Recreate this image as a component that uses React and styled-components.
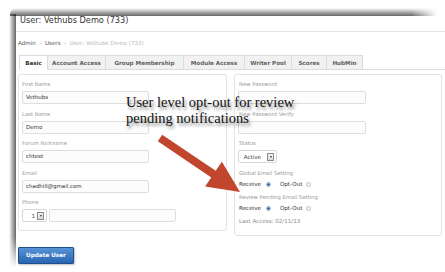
import React from 'react';
import styled, { createGlobalStyle } from 'styled-components';

const GlobalStyle = createGlobalStyle`
  html, body {
    margin: 0;
    padding: 0;
    background: #ffffff;
    overflow: hidden;
  }
  body {
    font-family: "DejaVu Sans", Verdana, sans-serif;
  }
`;

const Page = styled.div`
  position: relative;
  width: 445px;
  height: 272px;
  overflow: hidden;
  background: #fff;
`;

const Frame = styled.div`
  position: relative;
  margin: 16px 0 0 16px;
  width: 440px;
  height: 252px;
  background: #fff;

  &::before {
    content: '';
    position: absolute;
    left: -7px;
    top: -2px;
    bottom: 0;
    width: 7px;
    background: linear-gradient(to right, rgba(0, 0, 0, 0), rgba(0, 0, 0, 0.25) 40%, rgba(0, 0, 0, 0.6));
    -webkit-mask-image: linear-gradient(to bottom, #000 0, #000 88%, transparent 100%);
    mask-image: linear-gradient(to bottom, #000 0, #000 88%, transparent 100%);
  }

  &::after {
    content: '';
    position: absolute;
    top: -8px;
    left: -6px;
    width: 427px;
    height: 8px;
    border-top-left-radius: 6px;
    background: linear-gradient(to bottom, rgba(0, 0, 0, 0), rgba(0, 0, 0, 0.25) 40%, rgba(0, 0, 0, 0.6));
    -webkit-mask-image: linear-gradient(to right, #000 0, #000 94%, transparent 100%);
    mask-image: linear-gradient(to right, #000 0, #000 94%, transparent 100%);
  }
`;

const TitleBar = styled.div`
  padding: 0 0 6px 4px;
  line-height: 9px;
  font-size: 8.2px;
  color: #333;
  border-bottom: 1px solid #e4e4e4;
`;

const Breadcrumb = styled.div`
  display: flex;
  align-items: center;
  gap: 3px;
  padding: 7px 0 8px 2px;
  line-height: 8px;
  font-size: 5.6px;
`;

const Crumb = styled.span`
  color: ${p => p.$muted ? '#b8b8b8' : '#555'};
`;

const Sep = styled.span`
  color: #cfcfcf;
  font-size: 5px;
`;

const TabBar = styled.div`
  display: flex;
  margin-left: 3px;
  height: 14px;
  border-bottom: 1px solid #dcdcdc;
`;

const Tab = styled.div`
  width: ${p => p.$w}px;
  box-sizing: border-box;
  display: flex;
  align-items: center;
  justify-content: center;
  font-size: 5.6px;
  font-weight: bold;
  color: ${p => p.$active ? '#333' : '#606060'};
  background: ${p => p.$active ? '#fff' : '#f1f1f1'};
  border: 1px solid #dcdcdc;
  border-left-width: ${p => p.$first ? 1 : 0}px;
  border-bottom: ${p => p.$active ? '1px solid #fff' : 'none'};
  margin-bottom: ${p => p.$active ? -1 : 0}px;
`;

const Columns = styled.div`
  display: flex;
  align-items: flex-start;
  gap: 7px;
  margin: 4px 0 0 2px;
`;

const Panel = styled.div`
  box-sizing: border-box;
  width: ${p => p.$w}px;
  border: 1px solid #e3e3e3;
  border-radius: 3px;
  padding: 6px 3px ${p => p.$pb}px;
`;

const Field = styled.div`
  margin-bottom: ${p => p.$mb ?? 6.5}px;
`;

const Label = styled.div`
  font-size: 5.3px;
  line-height: 6px;
  color: #9a9a9a;
  margin-bottom: 4px;
  padding-left: ${p => p.$pl || 0}px;
`;

const Input = styled.div`
  box-sizing: border-box;
  width: ${p => p.$w}px;
  height: 13px;
  border: 1px solid #dedede;
  border-radius: 2px;
  background: #fcfcfc;
  font-size: 5.5px;
  line-height: 11px;
  padding-left: 3px;
  color: #333;
`;

const Row = styled.div`
  display: flex;
  gap: 2px;
`;

const Select = styled.div`
  box-sizing: border-box;
  width: ${p => p.$w}px;
  height: ${p => p.$h}px;
  border: 1px solid #d6d6d6;
  border-radius: 2px;
  background: #fff;
  display: flex;
  align-items: center;
  justify-content: flex-end;
  gap: ${p => p.$gap}px;
  padding-right: 2px;
  font-size: 5.6px;
  color: #444;
`;

const DropBtn = styled.span`
  box-sizing: border-box;
  width: 7px;
  height: 8px;
  border: 1px solid #8a8a8a;
  background: linear-gradient(#f4f4f4, #d8d8d8);
  display: flex;
  align-items: center;
  justify-content: center;

  &::after {
    content: '';
    border-left: 1.5px solid transparent;
    border-right: 1.5px solid transparent;
    border-top: 2px solid #333;
  }
`;

const RadioRow = styled.div`
  display: flex;
  align-items: center;
  height: 9px;
  margin-bottom: ${p => p.$mb}px;
  font-size: 5.6px;
  color: #333;
  padding-left: 1px;
`;

const RadioText = styled.span`
  margin-right: ${p => p.$mr}px;
`;

const Radio = styled.span`
  box-sizing: border-box;
  width: 5px;
  height: 5px;
  border-radius: 50%;
  border: 1px solid ${p => p.$on ? '#8fa9c2' : '#c4c4c4'};
  background: ${p => p.$on ? 'radial-gradient(circle, #1f5f96 0, #1f5f96 45%, #d6e2ee 55%)' : '#f6f6f6'};
  margin-right: ${p => p.$mr || 0}px;
`;

const Muted = styled.div`
  font-size: 5.6px;
  line-height: 7px;
  color: #8c8c8c;
  padding-left: 1px;
`;

const Button = styled.button`
  display: block;
  margin: 11px 0 0 2px;
  width: 56px;
  height: 17px;
  padding: 0;
  border: 1px solid #1f4f8c;
  border-radius: 1px;
  background: linear-gradient(#5593d6, #2a64b2);
  color: #fff;
  font-family: "DejaVu Sans", Verdana, sans-serif;
  font-size: 5.7px;
  font-weight: bold;
  box-shadow: 1px 1px 2px rgba(0, 0, 0, 0.25);
`;

const Note = styled.div`
  position: absolute;
  left: 126px;
  top: 94px;
  width: 190px;
  font-family: "Liberation Serif", "Times New Roman", serif;
  font-size: 14.5px;
  line-height: 16px;
  color: #111;
  text-shadow: 2px 3px 3px rgba(0, 0, 0, 0.45);
`;

const ArrowLayer = styled.svg`
  position: absolute;
  left: 0;
  top: 0;
  pointer-events: none;
`;

const tabs = [
  ['Basic', 29],
  ['Account Access', 58],
  ['Group Membership', 78],
  ['Module Access', 61],
  ['Writer Pool', 47],
  ['Scores', 35],
  ['HubMin', 36],
];

export default function App() {
  return (
    <Page>
      <GlobalStyle />
      <Frame>
        <TitleBar>User: Vethubs Demo (733)</TitleBar>
        <Breadcrumb>
          <Crumb>Admin</Crumb>
          <Sep>»</Sep>
          <Crumb>Users</Crumb>
          <Sep>»</Sep>
          <Crumb $muted>User: Vethubs Demo (733)</Crumb>
        </Breadcrumb>

        <TabBar>
          {tabs.map(([name, w], i) => (
            <Tab key={name} $w={w} $active={i === 0} $first={i === 0}>{name}</Tab>
          ))}
        </TabBar>

        <Columns>
          <Panel $w={209} $pb={8}>
            <Field>
              <Label>First Name</Label>
              <Input $w={127}>Vethubs</Input>
            </Field>
            <Field>
              <Label>Last Name</Label>
              <Input $w={127}>Demo</Input>
            </Field>
            <Field>
              <Label>Forum Nickname</Label>
              <Input $w={127}>chtest</Input>
            </Field>
            <Field>
              <Label>Email</Label>
              <Input $w={127}>chadhill@gmail.com</Input>
            </Field>
            <Field $mb={0}>
              <Label>Phone</Label>
              <Row>
                <Select $w={25} $h={13} $gap={2}>1<DropBtn /></Select>
                <Input $w={127} />
              </Row>
            </Field>
          </Panel>

          <Panel $w={208} $pb={10}>
            <Field>
              <Label $pl={1}>New Password</Label>
              <Input $w={128} />
            </Field>
            <Field>
              <Label $pl={1}>New Password Verify</Label>
              <Input $w={128} />
            </Field>
            <Field>
              <Label $pl={1}>Status</Label>
              <Select $w={39} $h={13} $gap={6}>Active<DropBtn /></Select>
            </Field>
            <Label $pl={1}>Global Email Setting</Label>
            <RadioRow $mb={5}>
              <RadioText $mr={5}>Receive</RadioText>
              <Radio $on $mr={9} />
              <RadioText $mr={4}>Opt-Out</RadioText>
              <Radio />
            </RadioRow>
            <Label $pl={1}>Review Pending Email Setting</Label>
            <RadioRow $mb={5}>
              <RadioText $mr={5}>Receive</RadioText>
              <Radio $on $mr={9} />
              <RadioText $mr={4}>Opt-Out</RadioText>
              <Radio />
            </RadioRow>
            <Muted>Last Access: 02/11/13</Muted>
          </Panel>
        </Columns>

        <Button>Update User</Button>
      </Frame>

      <Note>User level opt-out for review pending notifications</Note>

      <ArrowLayer width="445" height="272" viewBox="0 0 445 272">
        <polygon
          points="162.2,134.7 215.7,170.8 221.9,161.7 240,192 205.1,186.5 211.3,177.4 157.8,141.3"
          fill="#c1462d"
        />
      </ArrowLayer>
    </Page>
  );
}
